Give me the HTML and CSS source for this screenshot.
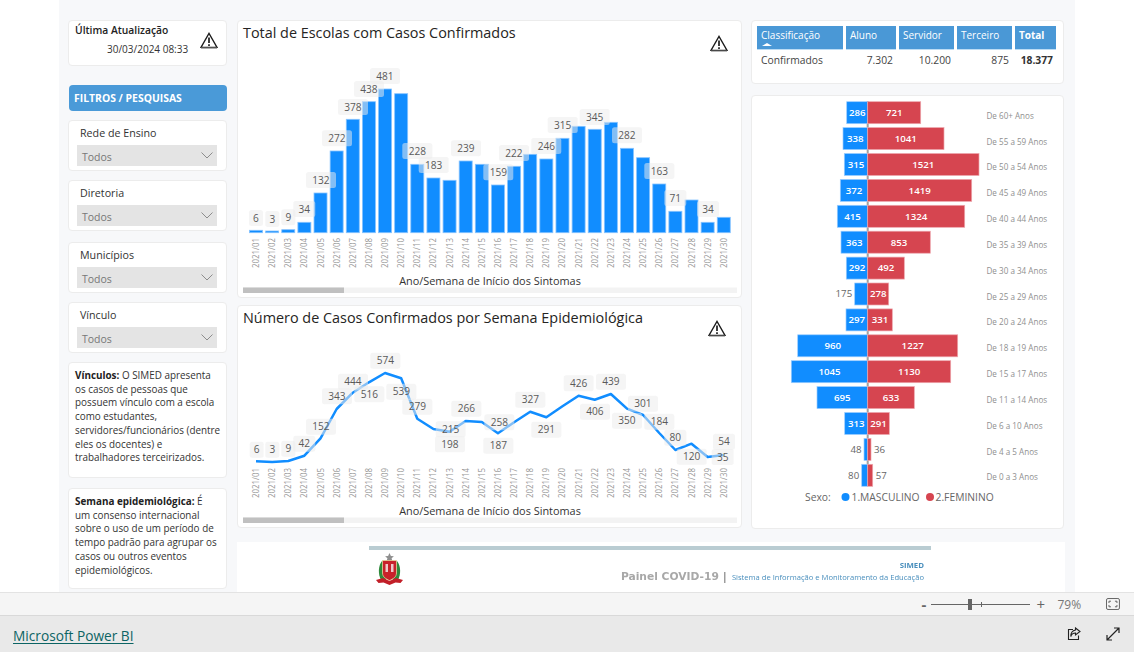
FILE: index.html
```html
<!DOCTYPE html>
<html lang="pt-BR">
<head>
<meta charset="utf-8">
<title>Painel COVID-19</title>
<link rel="stylesheet" href="styles.css">
</head>
<body>
<svg class="defs" width="0" height="0" aria-hidden="true">
  <symbol id="warn" viewBox="0 0 18 17">
    <path d="M9 1.4 17 15.4H1Z" fill="#fff" stroke="#1c1c1c" stroke-width="1.3" stroke-linejoin="miter"/>
    <path d="M1 16h16" stroke="#777" stroke-width="1.2"/>
    <path d="M9 5.6v5.4" stroke="#1c1c1c" stroke-width="1.7"/>
    <path d="M9 12.2v1.7" stroke="#1c1c1c" stroke-width="1.7"/>
  </symbol>
  <symbol id="chev" viewBox="0 0 12 7">
    <path d="M.5.5 6 6 11.500.5" fill="none" stroke="#8c8c8c" stroke-width="1"/>
  </symbol>
</svg>

<main class="canvas">
  <aside class="left">
    <section class="card update">
      <div class="update-text">
        <h3>Última Atualização</h3>
        <p>30/03/2024 08:33</p>
      </div>
      <svg class="warn"><use href="#warn"/></svg>
    </section>

    <div class="filters-title">FILTROS / PESQUISAS</div>

    <section class="card filter">
      <label>Rede de Ensino</label>
      <div class="select"><span>Todos</span><svg class="chev"><use href="#chev"/></svg></div>
    </section>
    <section class="card filter filter-wide">
      <label>Diretoria</label>
      <div class="select"><span>Todos</span><svg class="chev"><use href="#chev"/></svg></div>
    </section>
    <section class="card filter">
      <label>Municípios</label>
      <div class="select"><span>Todos</span><svg class="chev"><use href="#chev"/></svg></div>
    </section>
    <section class="card filter">
      <label>Vínculo</label>
      <div class="select"><span>Todos</span><svg class="chev"><use href="#chev"/></svg></div>
    </section>

    <section class="card note note-a">
      <p><b>Vínculos:</b> O SIMED apresenta<br>os casos de pessoas que<br>possuem vínculo com a escola<br>como estudantes,<br>servidores/funcionários (dentre<br>eles os docentes) e<br>trabalhadores terceirizados.</p>
    </section>
    <section class="card note note-b">
      <p><b>Semana epidemiológica:</b> É<br>um consenso internacional<br>sobre o uso de um período de<br>tempo padrão para agrupar os<br>casos ou outros eventos<br>epidemiológicos.</p>
    </section>
  </aside>

  <div class="content">
    <div class="columns">
      <div class="charts">
        <section class="card chart chart-bars">
          <header class="chart-head">
            <h2>Total de Escolas com Casos Confirmados</h2>
            <svg class="warn"><use href="#warn"/></svg>
          </header>
          <svg id="bars" class="plot" viewBox="238 55 503 242"></svg>
        </section>
        <section class="card chart chart-line">
          <header class="chart-head chart-head-line">
            <h2>Número de Casos Confirmados por Semana Epidemiológica</h2>
            <svg class="warn"><use href="#warn"/></svg>
          </header>
          <svg id="line" class="plot" viewBox="238 340 503 187"></svg>
        </section>
      </div>

      <div class="side">
        <section class="card table-card">
          <div class="grid-table">
            <div class="th th-sort">Classificação<i class="caret"></i></div>
            <div class="th">Aluno</div>
            <div class="th">Servidor</div>
            <div class="th">Terceiro</div>
            <div class="th th-total">Total</div>
            <div class="td td-name">Confirmados</div>
            <div class="td">7.302</div>
            <div class="td">10.200</div>
            <div class="td">875</div>
            <div class="td td-total">18.377</div>
          </div>
        </section>
        <section class="card pyramid">
          <svg id="pyramid" class="plot" viewBox="752 96 311 432"></svg>
        </section>
      </div>
    </div>

    <footer class="banner">
      <div class="banner-rule"></div>
      <div class="banner-row">
        <svg class="crest" viewBox="0 0 27 32" aria-hidden="true">
          <path d="M13.500 0l1.400 3 3 .3-2.300 2 .7 2.700h-5.600l.7-2.700-2.300-2 3-.3z" fill="#8f8f8f"/>
          <path d="M6 8C2 13 2 21 5 27l5 1V8z" fill="#2f8a3c"/>
          <path d="M21 8c4 5 4 13 1 19l-5 1V8z" fill="#2f8a3c"/>
          <path d="M6.500 7.500h14V20c0 4-3.500 6-7 7.500-3.500-1.500-7-3.500-7-7.500z" fill="#c8222a" stroke="#e6d49a" stroke-width=".8"/>
          <path d="M9.500 11h2.500v8H9.500zM15 11h2.500v8H15z" fill="#eec9c9"/>
          <path d="M0 27l7-2 6.500 3 6.500-3 7 2-2.500 3-5-.5-6 2.500-6-2.500-5 .5z" fill="#c21f28"/>
        </svg>
        <div class="banner-text">
          <div class="banner-simed">SIMED</div>
          <div class="banner-line"><span class="banner-name">Painel COVID-19</span><span class="banner-sep">|</span><span class="banner-desc">Sistema de Informação e Monitoramento da Educação</span></div>
        </div>
      </div>
    </footer>
  </div>
</main>

<div class="statusbar">
  <span class="zoom-btn">-</span>
  <div class="slider"><i class="slider-thumb"></i><i class="slider-tick"></i></div>
  <span class="zoom-btn zoom-plus">+</span>
  <span class="zoom-value">79%</span>
  <svg class="fit" viewBox="0 0 14 12" aria-hidden="true">
    <rect x=".5" y=".5" width="13" height="11" rx="1.500" fill="none" stroke="#666"/>
    <path d="M3 5V3.200h2M9 3.200h2V5M11 7v1.800H9M5 8.800H3V7" fill="none" stroke="#666"/>
  </svg>
</div>

<div class="bottombar">
  <a class="pbi-link" href="#">Microsoft Power BI</a>
  <svg class="share" viewBox="0 0 14 14" aria-hidden="true">
    <path d="M6 2.500H1.500v10h10V8.500" fill="none" stroke="#222" stroke-width="1.100"/>
    <path d="M8.500 1l4.500 3.500-4.500 3.500V6C6 6 4.500 7 3.800 9.500 3.800 6 5.500 3.500 8.500 3z" fill="none" stroke="#222" stroke-width="1.100"/>
  </svg>
  <svg class="expand" viewBox="0 0 14 14" aria-hidden="true">
    <path d="M1 13 13 1M8 1h5v5M1 8v5h5" fill="none" stroke="#222" stroke-width="1.200"/>
  </svg>
</div>

<script src="chart.js"></script>
</body>
</html>
```

FILE: styles.css
```css
* { box-sizing: border-box; }
html, body { margin: 0; height: 100%; }
body {
  display: flex;
  flex-direction: column;
  height: 652px;
  overflow: hidden;
  background: #fff;
  font-family: "Open Sans", "Noto Sans", sans-serif;
  color: #252423;
}
.defs { position: absolute; }
h2, h3, p { margin: 0; font-weight: 400; }

.canvas {
  display: flex;
  width: 1016px;
  height: 592px;
  margin-left: 59px;
  padding: 20px 0 0 9px;
  background: #f7f8fa;
}
.card {
  background: #fff;
  border: 1px solid #ececec;
  border-radius: 4px;
}
.warn { width: 18px; height: 17px; flex: none; }

.left {
  display: flex;
  flex-direction: column;
  width: 159px;
  margin-right: 10px;
}
.update {
  display: flex;
  justify-content: space-between;
  height: 46px;
  padding: 2px 8px 0 6px;
}
.update .warn { margin-top: 9px; }
.update h3 { font-size: 10.300px; font-weight: 600; line-height: 14px; color: #222; }
.update p { font-size: 10px; line-height: 14px; margin: 5px 0 0 32px; color: #333; white-space: nowrap; }
.filters-title {
  height: 26px;
  margin: 19px 0 9px 1px;
  padding-left: 5px;
  background: #4a9ad8;
  border-radius: 4px;
  font-size: 10.400px;
  font-weight: 700;
  line-height: 26px;
  color: #fff;
}
.filter {
  height: 51px;
  margin-bottom: 9px;
  padding: 5px 9px 0 8px;
}
.filter-wide { margin-bottom: 11px; }
.filter label {
  display: block;
  height: 14px;
  padding-left: 3px;
  font-size: 10.700px;
  line-height: 14px;
  color: #333;
}
.select {
  display: flex;
  align-items: center;
  justify-content: space-between;
  height: 21px;
  margin-top: 5px;
  padding: 2px 4px 0 5px;
  background: #e4e4e4;
  font-size: 10.500px;
  color: #777;
}
.chev { width: 12px; height: 7px; margin-top: -3px; }
.note { padding: 6px 6px 0; font-size: 9.900px; line-height: 13.700px; color: #333; white-space: nowrap; }
.note b { font-weight: 700; color: #222; }
.note-a { height: 116px; margin-bottom: 10px; }
.note-b { height: 101px; }

.content {
  display: flex;
  flex-direction: column;
  width: 828px;
}
.columns { display: flex; gap: 9px; height: 522px; }
.charts { display: flex; flex-direction: column; gap: 7px; width: 505px; }
.chart { overflow: hidden; }
.chart-bars { height: 278px; }
.chart-line { height: 223px; }
.chart-head {
  display: flex;
  justify-content: space-between;
  padding: 2px 13px 0 5px;
  height: 34px;
}
.chart-head-line { padding-right: 15px; }
.chart-head h2 { font-size: 14.400px; line-height: 20px; color: #252423; white-space: nowrap; }
.chart-head .warn { margin-top: 12px; }
.plot { display: block; width: 100%; }
.plot text { font-family: "Open Sans", "Noto Sans", sans-serif; }

.side { display: flex; flex-direction: column; gap: 11px; width: 313px; }
.table-card { height: 64px; padding: 5px 7px 0 5px; }
.grid-table {
  display: grid;
  grid-template-columns: 86px 50px 55px 55px 41px;
  grid-auto-rows: auto;
  column-gap: 3px;
}
.th {
  position: relative;
  height: 24px;
  padding: 2px 0 0 4px;
  background: #4a98d6;
  border-bottom: 1px solid #bcdcf4;
  font-size: 10px;
  line-height: 14px;
  color: #fff;
}
.th-total { font-weight: 700; }
.caret {
  position: absolute;
  left: 5px;
  top: 17px;
  border: 5px solid transparent;
  border-top: 0;
  border-bottom: 3px solid #fff;
}
.td { padding-top: 3px; font-size: 10.300px; line-height: 14px; text-align: right; color: #444; padding-right: 3px; }
.td-name { text-align: left; padding-left: 4px; }
.td-total { font-weight: 700; color: #333; }
.pyramid { height: 434px; }

.banner {
  height: 50px;
  background: #fff;
  filter: blur(.4px);
}
.banner-rule { height: 4px; margin: 4px 134px 0 132px; background: #b9ccd2; }
.banner-row { display: flex; justify-content: space-between; margin: 3px 141px 0 139px; }
.crest { width: 27px; height: 32px; }
.banner-text { margin-top: 8px; text-align: right; }
.banner-simed { font-size: 7.800px; line-height: 9px; font-weight: 700; color: #4a8fbd; }
.banner-line { display: flex; align-items: baseline; line-height: 12px; white-space: nowrap; }
.banner-name { font-family: "DejaVu Sans", sans-serif; font-size: 10.700px; font-weight: 700; color: #a8a8a8; }
.banner-sep { margin: 0 4px 0 3px; font-size: 11px; font-weight: 700; color: #888; }
.banner-desc { font-size: 7.600px; color: #4a8fbd; }

.statusbar {
  display: flex;
  align-items: center;
  height: 24px;
  padding: 0 14px 0 920px;
  background: #f5f5f5;
  border-top: 1px solid #e3e3e3;
  border-bottom: 1px solid #d9d9d9;
  color: #666;
}
.zoom-btn { width: 8px; font-size: 15px; font-weight: 700; line-height: 20px; text-align: center; }
.slider { position: relative; width: 100px; height: 1px; margin: 0 6px 0 3px; background: #666; }
.slider-thumb { position: absolute; left: 37px; top: -5px; width: 4px; height: 11px; background: #666; }
.slider-tick { position: absolute; left: 50px; top: -2px; width: 1px; height: 5px; background: #666; }
.zoom-plus { font-weight: 400; font-size: 15px; }
.zoom-value { margin-left: 13px; font-size: 12px; color: #777; }
.fit { width: 14px; height: 12px; margin-left: 25px; }

.bottombar {
  display: flex;
  align-items: center;
  flex: 1;
  padding: 3px 14px 0 13px;
  background: #e9e9e9;
}
.pbi-link { font-size: 13.700px; color: #0c6464; text-underline-offset: 2px; }
.share { width: 14px; height: 14px; margin: -3px 0 0 auto; }
.expand { width: 14px; height: 14px; margin: -3px 0 0 25px; }
```

FILE: chart.js
```js
const NS = 'http://www.w3.org/2000/svg';
function el(parent, tag, attrs, text) {
  const n = document.createElementNS(NS, tag);
  for (const k in attrs) n.setAttribute(k, attrs[k]);
  if (text !== undefined) n.textContent = text;
  parent.appendChild(n);
  return n;
}
const X0 = 256, STEP = 16.13;
const cx = i => X0 + STEP * i;
const week = i => '2021/' + String(i + 1).padStart(2, '0');

function axis(svg, top, titleY, scrollY) {
  for (let i = 0; i < 30; i++) {
    const x = cx(i) + 3, y = top + 30;
    el(svg, 'text', {
      x, y, fill: '#969696', 'font-size': '8.200', textLength: 30, lengthAdjust: 'spacingAndGlyphs',
      transform: `rotate(-90 ${x} ${y})`
    }, week(i));
  }
  el(svg, 'text', { x: 490, y: titleY, 'text-anchor': 'middle', 'font-size': '10.900', fill: '#333' },
    'Ano/Semana de Início dos Sintomas');
  el(svg, 'rect', { x: 243, y: scrollY, width: 494, height: 5.500, fill: '#f3f3f3' });
  el(svg, 'rect', { x: 243, y: scrollY, width: 101, height: 5.500, fill: '#c0c0c0' });
}
function labels(svg, list) {
  for (const [t, x, y] of list) {
    const w = 6 + String(t).length * 8;
    el(svg, 'rect', { x: x - w / 2, y: y - 8, width: w, height: 16, rx: 2.500, fill: 'rgba(236,236,236,.52)' });
    el(svg, 'text', { x, y: y + 3.700, 'text-anchor': 'middle', 'font-size': '10.100', fill: '#5a5a5a' }, t);
  }
}

/* bar chart */
const barTops = [230.3,231,229.7,222.3,193,151,119.3,101.7,89,93.7,164.3,178,180.3,161,164.3,185,166.3,154.3,159,138.3,126.3,129.3,122.3,148.3,157.7,184,211.3,200,222.3,217.3];
const bars = document.getElementById('bars');
barTops.forEach((top, i) => {
  el(bars, 'rect', { x: cx(i) - 6.500, y: top, width: 13, height: 232.700 - top, fill: '#118dff', stroke: '#86c3ff', 'stroke-width': .8 });
});
axis(bars, 238, 285, 287.500);
labels(bars, [[6,256,218],[3,272.3,219],[9,288.3,217.3],[34,304.3,209],[132,321,180],[272,337,138.3],[378,353,107],[438,369,89],[481,385,76],[228,417.3,151],[183,433.7,165],[239,466,148.3],[159,498.3,172.3],[222,514,153],[246,546.3,146],[315,562.7,125],[345,594.7,117],[282,627,135.3],[163,659.3,171],[71,675.3,198],[34,708,209]]);

/* line chart */
const lineY = [461.3,462,461,455.7,438.3,409,392.7,382.3,373,378.3,418.7,429,431.7,421,422,433.3,422.3,411.7,417.3,406.3,395.7,399.7,394,408.7,415,433,450,443.7,457,455];
const line = document.getElementById('line');
el(line, 'polyline', { points: lineY.map((y, i) => cx(i) + ',' + y).join(' '), fill: 'none', stroke: '#118dff', 'stroke-width': 2.500, 'stroke-linejoin': 'round' });
axis(line, 468, 515, 517.500);
labels(line, [[6,256.7,449.7],[3,272.3,449.7],[9,288.3,448.7],[42,304.3,443.7],[152,321,426.7],[343,337,396.3],[444,353,381.7],[516,369.3,394.3],[574,385.3,360.7],[539,401.3,391.7],[279,417.3,406.7],[215,450.7,429.3],[198,450,444.3],[266,466.3,408.7],[258,499.3,422.3],[187,498.3,445.7],[327,530.3,399.7],[291,546.3,429.7],[426,578.7,383.3],[406,595,411.7],[439,611,381.7],[350,627,420.7],[301,643,403.7],[184,659.3,421.7],[80,675.3,437.7],[120,691.7,456.7],[54,724,441.7],[35,722.7,457]]);

/* population pyramid */
const CENTER = 867.700;
const rows = [
  ['De 60+ Anos',286,846.7,721,920.7,116.3],
  ['De 55 a 59 Anos',338,843,1041,944,142],
  ['De 50 a 54 Anos',315,844.3,1521,979,167],
  ['De 45 a 49 Anos',372,840.3,1419,971.7,193],
  ['De 40 a 44 Anos',415,837.3,1324,964.7,219],
  ['De 35 a 39 Anos',363,841,853,930.3,245],
  ['De 30 a 34 Anos',292,846.3,492,904.3,271],
  ['De 25 a 29 Anos',175,854.7,278,888.7,297],
  ['De 20 a 24 Anos',297,846,331,892.3,322],
  ['De 18 a 19 Anos',960,797.7,1227,957.7,348],
  ['De 15 a 17 Anos',1045,791.3,1130,950.7,374],
  ['De 11 a 14 Anos',695,817,633,914.3,400],
  ['De 6 a 10 Anos',313,844.7,291,889.3,426],
  ['De 4 a 5 Anos',48,864,36,871,452],
  ['De 0 a 3 Anos',80,861.7,57,872.7,477]
];
const pyr = document.getElementById('pyramid');
el(pyr, 'rect', { x: CENTER - 1, y: 101, width: 2, height: 385, fill: '#a0a0a0' });
rows.forEach(([name, m, mx, f, fx, ly], i) => {
  const top = 101.700 + i * 25.900, h = 22, mid = top + h / 2 + 3.300;
  el(pyr, 'rect', { x: mx, y: top, width: CENTER - mx, height: h, fill: '#118dff', stroke: '#9ccdff', 'stroke-width': .7 });
  el(pyr, 'rect', { x: CENTER, y: top, width: fx - CENTER, height: h, fill: '#d64550', stroke: '#eda6ad', 'stroke-width': .7 });
  if (CENTER - mx > 20) {
    el(pyr, 'text', { x: (mx + CENTER) / 2, y: mid, 'text-anchor': 'middle', 'font-size': '9.700', 'font-weight': 600, fill: '#fff' }, m);
  } else {
    el(pyr, 'text', { x: mx - 2.500, y: mid, 'text-anchor': 'end', 'font-size': '9.700', fill: '#666' }, m);
  }
  if (fx - CENTER > 15) {
    el(pyr, 'text', { x: (fx + CENTER) / 2, y: mid, 'text-anchor': 'middle', 'font-size': '9.700', 'font-weight': 600, fill: '#fff' }, f);
  } else {
    el(pyr, 'text', { x: fx + 3, y: mid, 'font-size': '9.700', fill: '#666' }, f);
  }
  el(pyr, 'text', { x: 986.500, y: ly + 2.800, 'font-size': '8.100', fill: '#8f8f8f' }, name);
});
el(pyr, 'text', { x: 805, y: 501, 'font-size': '10.300', fill: '#666' }, 'Sexo:');
el(pyr, 'circle', { cx: 845.500, cy: 497, r: 4, fill: '#118dff' });
el(pyr, 'text', { x: 851.500, y: 501, 'font-size': '10.300', fill: '#666' }, '1.MASCULINO');
el(pyr, 'circle', { cx: 930, cy: 497, r: 4, fill: '#d64550' });
el(pyr, 'text', { x: 935.500, y: 501, 'font-size': '10.300', fill: '#666' }, '2.FEMININO');
```
